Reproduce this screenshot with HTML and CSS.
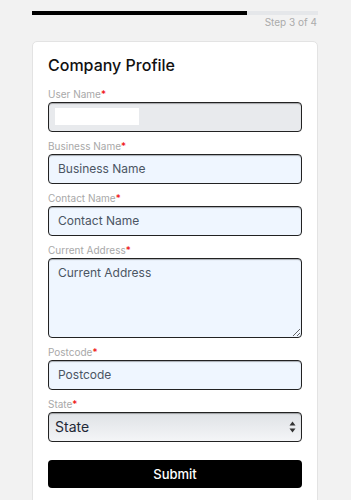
FILE: index.html
```html
<!DOCTYPE html>
<html lang="en">
<head>
<meta charset="utf-8">
<title>Company Profile</title>
<link rel="stylesheet" href="styles.css">
</head>
<body>
<div class="page">
  <div class="progress"><div class="progress-fill" style="width:75%"></div></div>
  <div class="step">Step 3 of 4</div>
  <form class="card">
    <h1 class="title">Company Profile</h1>
    <div class="field">
      <label class="label">User Name<span class="req">*</span></label>
      <div class="control control-disabled"><span class="masked"></span></div>
    </div>
    <div class="field">
      <label class="label">Business Name<span class="req">*</span></label>
      <input class="control" type="text" placeholder="Business Name">
    </div>
    <div class="field">
      <label class="label">Contact Name<span class="req">*</span></label>
      <input class="control" type="text" placeholder="Contact Name">
    </div>
    <div class="field">
      <label class="label">Current Address<span class="req">*</span></label>
      <textarea class="control area" placeholder="Current Address"></textarea>
    </div>
    <div class="field">
      <label class="label">Postcode<span class="req">*</span></label>
      <input class="control" type="text" placeholder="Postcode">
    </div>
    <div class="field">
      <label class="label">State<span class="req">*</span></label>
      <div class="select-wrap">
        <select class="control select"><option>State</option></select>
        <svg class="arrows" width="7" height="12" viewBox="0 0 7 12"><path d="M3.5 0.5 L6.5 4.5 L0.5 4.5 Z M3.5 11.5 L6.5 7.5 L0.5 7.5 Z" fill="#333"/></svg>
      </div>
    </div>
    <button class="submit" type="button">Submit</button>
  </form>
</div>
</body>
</html>
```
FILE: styles.css
```css
* { box-sizing: border-box; }
html, body { margin: 0; padding: 0; background: #f2f2f2; }
body { font-family: Inter, "Noto Sans", "Liberation Sans", sans-serif; color: #111; }
.page { padding: 11px 33px 0 32px; }
.progress { height: 4px; background: #e5e7ea; }
.progress-fill { height: 4px; background: #000; }
.step { text-align: right; font-size: 10px; line-height: 12px; color: #ababab; margin-top: 1px; padding-right: 1px; }
.card {
  margin-top: 13px;
  background: #fff;
  border: 1px solid #e3e3e3;
  border-radius: 5px;
  padding: 13px 15px 20px;
  display: flex;
  flex-direction: column;
}
.title { margin: 0 0 12.5px; font-size: 16px; line-height: 20px; font-weight: 500; color: #111; }
.field { display: flex; flex-direction: column; margin-bottom: 8px; }
.label { font-size: 10px; line-height: 12px; color: #a8a8a8; margin-bottom: 2px; }
.req { color: #e00; }
.control {
  height: 30px;
  width: 100%;
  border: 1px solid #222;
  border-radius: 4px;
  background: #eff6ff;
  box-shadow: inset 0 1px 1px rgba(0,0,0,0.3);
  padding: 0 9px;
  font-family: inherit;
  font-size: 12px;
  color: #333;
  outline: none;
}
.control::placeholder { color: #4b5563; opacity: 1; }
.control-disabled { background: #e8eaed; display: flex; align-items: center; padding: 0 0 0 6px; }
.masked { width: 84px; height: 17px; background: #fff; }
.area { height: 80px; padding: 6px 9px; resize: vertical; display: block; line-height: 16px; }
.select-wrap { position: relative; }
.select {
  appearance: none;
  -webkit-appearance: none;
  background: linear-gradient(#dfe2e6, #f4f5f7);
  font-size: 14px;
  color: #1f2937;
  padding: 0 6px;
}
.arrows { position: absolute; right: 6px; top: 9px; pointer-events: none; }
.submit {
  margin-top: 10px;
  height: 28px;
  border: 0;
  border-radius: 4px;
  background: #000;
  color: #fff;
  font-family: inherit;
  font-size: 13px;
  font-weight: 500;
}
```
